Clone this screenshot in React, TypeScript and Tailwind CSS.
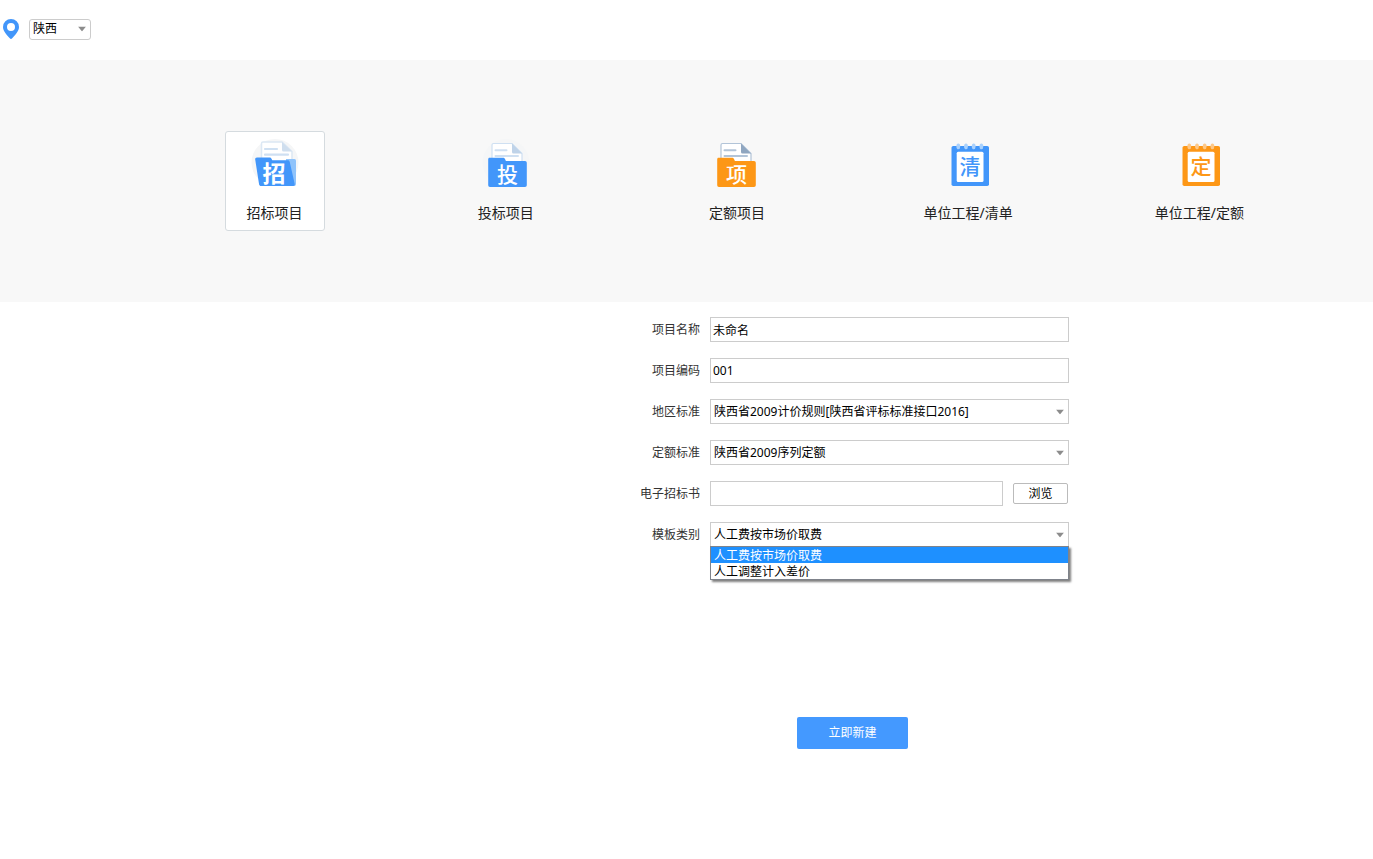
import { useState, type ReactNode } from "react";

const REGIONS = ["陕西", "山西", "甘肃"];
const AREA_STANDARDS = ["陕西省2009计价规则[陕西省评标标准接口2016]"];
const QUOTA_STANDARDS = ["陕西省2009序列定额"];
const TEMPLATES = ["人工费按市场价取费", "人工调整计入差价"];

const FIELD = "block h-[25px] w-full appearance-none rounded-none border border-[#ccc] bg-white text-black outline-none";

function TenderIcon() {
  return (
    <svg viewBox="0 0 50 50" className="size-[50px]" aria-hidden="true">
      <circle cx="25" cy="24.5" r="23.5" fill="#f5f6f7" />
      <path d="M13 4h19l10 9.5V36H11.5V5.5A1.5 1.5 0 0 1 13 4z" fill="#fff" stroke="#dce8f4" strokeWidth="1.5" />
      <path d="M32 4v8a1.5 1.5 0 0 0 1.5 1.5H42z" fill="#cfdeee" />
      <path d="M15 11h12M15 16.7h23" stroke="#cfe0f2" strokeWidth="2.2" strokeLinecap="round" />
      <path d="M36 21h8.5a1.5 1.5 0 0 1 1.5 1.5V46a2 2 0 0 1-2 2h-8z" fill="#8fc3fb" />
      <path
        d="M7 19.5h12.500c1 0 1.500.5 2 1.300l.8 1.500h15.500c1 0 1.700.6 1.900 1.500l5 22.200c.3 1-.3 2-1.400 2H11c-1 0-1.700-.6-1.900-1.500L5.200 21.500c-.2-1.100.6-2 1.800-2z"
        fill="#4296fa"
      />
      <text x="24" y="43.5" fontSize="23" fill="#fff" textAnchor="middle" className="font-bold">
        招
      </text>
    </svg>
  );
}

function FolderIcon({
  label,
  color,
  line,
  fold,
  faint,
  viewBox,
}: {
  label: string;
  color: string;
  line: string;
  fold: string;
  faint: string;
  viewBox: string;
}) {
  return (
    <svg viewBox={viewBox} className="size-[50px]" aria-hidden="true">
      <circle cx="25" cy="24.5" r="23.5" fill={faint} />
      <path d="M12.5 5.5h18.5l10 10V30H11V7a1.5 1.5 0 0 1 1.5-1.5z" fill="#fff" stroke={line} strokeWidth="1.2" />
      <path d="M31 5.5V14a1.5 1.5 0 0 0 1.5 1.5H41z" fill={fold} />
      <path d="M14.5 12.3h11M14.5 18h22.5" stroke={line} strokeWidth="2" strokeLinecap="round" />
      <path
        d="M8.5 19.700h13.500c1 0 1.600.4 2 1.300l.9 2h19.100a1.800 1.800 0 0 1 1.800 1.800v22.400a1.800 1.800 0 0 1-1.800 1.800H9a1.800 1.800 0 0 1-1.800-1.800V21.200c0-.9.500-1.500 1.300-1.500z"
        fill={color}
      />
      <text x="26.5" y="44" fontSize="21" fill="#fff" textAnchor="middle" className="font-medium">
        {label}
      </text>
    </svg>
  );
}

function NotepadIcon({ label, color, ring }: { label: string; color: string; ring: string }) {
  return (
    <svg viewBox="-1 0 50 50" className="size-[50px]" aria-hidden="true">
      <rect x="7.5" y="8" width="37.5" height="40" rx="1.8" fill={color} />
      <rect x="12.7" y="13.8" width="26.8" height="30.2" rx="1.5" fill="#fff" />
      {[14.3, 22, 29.7, 37.4].map((x) => (
        <ellipse key={x} cx={x} cy="8.4" rx="1.9" ry="2.8" fill={ring} />
      ))}
      <text x="26" y="36" fontSize="21" fill={color} textAnchor="middle" className="font-medium">
        {label}
      </text>
    </svg>
  );
}

const PROJECT_TYPES = [
  { name: "招标项目", icon: <TenderIcon /> },
  {
    name: "投标项目",
    icon: <FolderIcon label="投" color="#4296fa" line="#cfe0f2" fold="#bfd3e9" faint="#f5f6f7" viewBox="0 0 50 50" />,
  },
  {
    name: "定额项目",
    icon: <FolderIcon label="项" color="#fd9716" line="#b2c4d8" fold="#8fa6c0" faint="#f8f8f8" viewBox="2 0 50 50" />,
  },
  { name: "单位工程/清单", icon: <NotepadIcon label="清" color="#4296fa" ring="#a9d1fd" /> },
  { name: "单位工程/定额", icon: <NotepadIcon label="定" color="#fd9716" ring="#fdc888" /> },
];

function SelectBox({
  id,
  label,
  options,
  value,
  onChange,
  className,
}: {
  id: string;
  label?: string;
  options: string[];
  value?: string;
  onChange?: (value: string) => void;
  className: string;
}) {
  return (
    <div className="relative">
      <select id={id} aria-label={label} value={value} onChange={(e) => onChange?.(e.target.value)} className={className}>
        {options.map((o) => (
          <option key={o}>{o}</option>
        ))}
      </select>
      <svg
        viewBox="0 0 8 5"
        className="pointer-events-none absolute top-1/2 right-[5px] h-[5px] w-2 -translate-y-1/2"
        aria-hidden="true"
      >
        <path d="M0 0h8L4 5z" fill="#8c8c8c" />
      </svg>
    </div>
  );
}

function Row({ id, label, children }: { id: string; label: string; children: ReactNode }) {
  return (
    <div className="grid grid-cols-[64px_1fr] items-center gap-[10px]">
      <label htmlFor={id} className="text-right text-[#333]">
        {label}
      </label>
      {children}
    </div>
  );
}

export default function App() {
  const [region, setRegion] = useState("陕西");
  const [type, setType] = useState("招标项目");
  const [template, setTemplate] = useState(TEMPLATES[0]);
  const [open, setOpen] = useState(true);

  const pickTemplate = (value: string) => {
    setTemplate(value);
    setOpen(false);
  };

  return (
    <div className="min-h-screen bg-white font-['Noto_Sans','Noto_Sans_CJK_SC',sans-serif] text-[12px] leading-4 text-black">
      <header className="flex h-[60px] items-center gap-[10px] px-[3px] pb-[2px]">
        <svg viewBox="0 0 16 20" className="h-5 w-4" aria-hidden="true">
          <path
            fillRule="evenodd"
            d="M8 0a8 8 0 0 0-8 8c0 4.500 4.500 8.500 6.800 11.300.7.900 1.700.9 2.400 0C11.500 16.500 16 12.500 16 8a8 8 0 0 0-8-8zm0 4a4 4 0 1 1 0 8 4 4 0 0 1 0-8z"
            fill="#4296fa"
          />
        </svg>
        <SelectBox
          id="region"
          label="地区"
          options={REGIONS}
          value={region}
          onChange={setRegion}
          className="block h-[21px] w-[62px] appearance-none rounded-[3px] border border-[#ccc] bg-white px-[3px] outline-none"
        />
      </header>

      <nav className="bg-[#f8f8f8] py-[71px] pr-[58px] pl-[159px]">
        <ul className="grid grid-cols-5 justify-items-center">
          {PROJECT_TYPES.map((t) => (
            <li key={t.name}>
              <button
                type="button"
                onClick={() => setType(t.name)}
                className={`flex size-[100px] flex-col items-center gap-[15px] rounded-[3px] border pt-[6px] ${
                  t.name === type ? "border-[#d5dbdf] bg-white" : "border-transparent"
                }`}
              >
                {t.icon}
                <span className="text-[14px] leading-5 whitespace-nowrap text-[#222]">{t.name}</span>
              </button>
            </li>
          ))}
        </ul>
      </nav>

      <main className="pl-[332px]">
        <form className="mx-auto flex max-w-[433px] flex-col gap-4 pt-[15px]" onSubmit={(e) => e.preventDefault()}>
          <Row id="name" label="项目名称">
            <input id="name" type="text" defaultValue="未命名" className={`${FIELD} px-[2px]`} />
          </Row>
          <Row id="code" label="项目编码">
            <input id="code" type="text" defaultValue="001" className={`${FIELD} px-[2px]`} />
          </Row>
          <Row id="area" label="地区标准">
            <SelectBox id="area" options={AREA_STANDARDS} className={`${FIELD} px-[3px]`} />
          </Row>
          <Row id="quota" label="定额标准">
            <SelectBox id="quota" options={QUOTA_STANDARDS} className={`${FIELD} px-[3px]`} />
          </Row>
          <Row id="file" label="电子招标书">
            <div className="flex items-center gap-[10px] pr-px">
              <input id="file" type="text" className={`${FIELD} px-[2px]`} />
              <button type="button" className="h-[21px] w-[55px] shrink-0 rounded-[2px] border border-[#bbb] bg-white">
                浏览
              </button>
            </div>
          </Row>
          <Row id="template" label="模板类别">
            <div className="relative">
              <SelectBox
                id="template"
                options={TEMPLATES}
                value={template}
                onChange={pickTemplate}
                className={`${FIELD} px-[3px]`}
              />
              {open && (
                <ul
                  role="listbox"
                  aria-label="模板类别"
                  className="absolute inset-x-0 top-6 border border-[#7f838b] bg-white shadow-[2px_2px_2px_rgba(0,0,0,0.5)]"
                >
                  {TEMPLATES.map((t) => (
                    <li
                      key={t}
                      role="option"
                      aria-selected={t === template}
                      onClick={() => pickTemplate(t)}
                      className={`h-4 px-[3px] leading-[18px] ${t === template ? "bg-[#1e90ff] text-white" : ""}`}
                    >
                      {t}
                    </li>
                  ))}
                </ul>
              )}
            </div>
          </Row>
          <button type="submit" className="mt-[154px] h-8 w-[111px] self-center rounded-[2px] bg-[#4499ff] text-white">
            立即新建
          </button>
        </form>
      </main>
    </div>
  );
}
